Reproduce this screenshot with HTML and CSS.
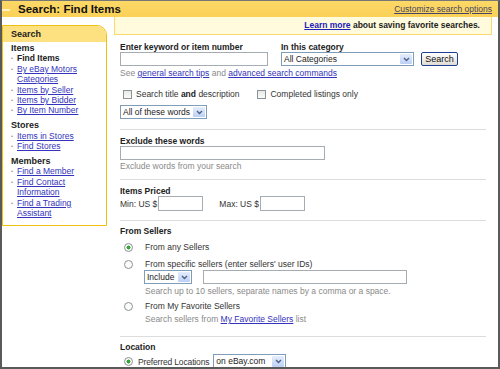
FILE: index.html
```html
<!DOCTYPE html>
<html lang="en">
<head>
    <meta charset="UTF-8">
    <meta name="viewport" content="width=device-width, initial-scale=1.0">
    <title>Search: Find Items</title>
    <link rel="stylesheet" href="styles.css">
</head>
<body>
<div class="frame">
    <div class="topbar">
        <span class="tab-mark"></span>
        <h1>Search: Find Items</h1>
        <a href="#" class="customize">Customize search options</a>
    </div>

    <div class="layout">
        <aside class="sidebar">
            <div class="side-head">Search</div>
            <div class="side-body">
                <div class="side-group">
                    <div class="side-title">Items</div>
                    <ul>
                        <li class="current">Find Items</li>
                        <li><a href="#">By eBay Motors Categories</a></li>
                        <li><a href="#">Items by Seller</a></li>
                        <li><a href="#">Items by Bidder</a></li>
                        <li><a href="#">By Item Number</a></li>
                    </ul>
                </div>
                <div class="side-group">
                    <div class="side-title">Stores</div>
                    <ul>
                        <li><a href="#">Items in Stores</a></li>
                        <li><a href="#">Find Stores</a></li>
                    </ul>
                </div>
                <div class="side-group">
                    <div class="side-title">Members</div>
                    <ul>
                        <li><a href="#">Find a Member</a></li>
                        <li><a href="#">Find Contact Information</a></li>
                        <li><a href="#">Find a Trading Assistant</a></li>
                    </ul>
                </div>
            </div>
        </aside>

        <main class="main">
            <div class="notice"><a href="#">Learn more</a> about saving favorite searches.</div>

            <section class="block block-first">
                <div class="search-row">
                    <div class="field">
                        <label class="label">Enter keyword or item number</label>
                        <input type="text" class="text keyword">
                    </div>
                    <div class="field">
                        <label class="label">In this category</label>
                        <span class="select category">
                            <span class="select-value">All Categories</span>
                            <span class="select-btn"><svg width="7" height="5" viewBox="0 0 7 5"><polyline points="1,1 3.5,3.5 6,1" fill="none" stroke="#4d6185" stroke-width="1.4"/></svg></span>
                        </span>
                    </div>
                    <button class="btn">Search</button>
                </div>
                <div class="hint">See <a href="#">general search tips</a> and <a href="#">advanced search commands</a></div>

                <div class="check-row">
                    <label class="check"><input type="checkbox"><span>Search title <b>and</b> description</span></label>
                    <label class="check"><input type="checkbox"><span>Completed listings only</span></label>
                </div>

                <span class="select words">
                    <span class="select-value">All of these words</span>
                    <span class="select-btn"><svg width="7" height="5" viewBox="0 0 7 5"><polyline points="1,1 3.5,3.5 6,1" fill="none" stroke="#4d6185" stroke-width="1.4"/></svg></span>
                </span>
            </section>

            <section class="block block-exclude">
                <label class="label">Exclude these words</label>
                <input type="text" class="text exclude">
                <div class="hint hint-tight">Exclude words from your search</div>
            </section>

            <section class="block block-price">
                <label class="label">Items Priced</label>
                <div class="price-row">
                    <span>Min: US $</span><input type="text" class="text price">
                    <span class="max">Max: US $</span><input type="text" class="text price">
                </div>
            </section>

            <section class="block block-sellers">
                <label class="label">From Sellers</label>
                <label class="radio first"><input type="radio" name="sellers" checked><span>From any Sellers</span></label>
                <label class="radio second"><input type="radio" name="sellers"><span>From specific sellers (enter sellers' user IDs)</span></label>
                <div class="sub">
                    <div class="sub-row">
                        <span class="select include">
                            <span class="select-value">Include</span>
                            <span class="select-btn"><svg width="7" height="5" viewBox="0 0 7 5"><polyline points="1,1 3.5,3.5 6,1" fill="none" stroke="#4d6185" stroke-width="1.4"/></svg></span>
                        </span>
                        <input type="text" class="text sellers">
                    </div>
                    <div class="hint">Search up to 10 sellers, separate names by a comma or a space.</div>
                </div>
                <label class="radio third"><input type="radio" name="sellers"><span>From My Favorite Sellers</span></label>
                <div class="sub hint">Search sellers from <a href="#">My Favorite Sellers</a> list</div>
            </section>

            <section class="block block-location">
                <label class="label">Location</label>
                <div class="loc-row">
                    <label class="radio inline"><input type="radio" name="loc" checked><span>Preferred Locations</span></label>
                    <span class="select location">
                        <span class="select-value">on eBay.com</span>
                        <span class="select-btn"><svg width="7" height="5" viewBox="0 0 7 5"><polyline points="1,1 3.5,3.5 6,1" fill="none" stroke="#4d6185" stroke-width="1.4"/></svg></span>
                    </span>
                </div>
            </section>
        </main>
    </div>
</div>
</body>
</html>
```

FILE: styles.css
```css
:root {
    --gold: #f0c010;
    --gold-light: #fde07f;
    --link: #3333bb;
    --text: #333;
    --muted: #8a8a8a;
    --field-border: #a5acb2;
}

body {
    margin: 0;
    font-family: "Liberation Sans", Arial, sans-serif;
    font-size: 8.5px;
    line-height: 10px;
    color: var(--text);
    background: #fff;
}

a {
    color: var(--link);
    text-decoration: underline;
}

.frame {
    width: 500px;
    height: 369px;
    box-sizing: border-box;
    border: 2px solid #5a5a5a;
    border-top: 1px solid #777;
    overflow: hidden;
    background: #fff;
}

/* top bar */
.topbar {
    height: 16px;
    display: flex;
    align-items: center;
    padding-right: 6px;
    background: linear-gradient(#fcd867, #fbd157);
}

.tab-mark {
    width: 8px;
    height: 2px;
    margin-top: 2px;
    margin-right: 8px;
    background: #fff3c4;
}

.topbar h1 {
    margin: 0;
    font-size: 11.5px;
    font-weight: bold;
    color: #111;
}

.customize {
    margin-left: auto;
    color: #444466;
}

.layout {
    display: flex;
    align-items: flex-start;
}

/* sidebar */
.sidebar {
    width: 105px;
    box-sizing: border-box;
    margin-top: 8px;
    border: 1px solid var(--gold);
    border-top-right-radius: 10px;
}

.side-head {
    height: 16px;
    line-height: 16px;
    padding-left: 8px;
    font-size: 9px;
    font-weight: bold;
    color: #222;
    background: var(--gold-light);
    border-top-right-radius: 9px;
}

.side-body {
    padding: 1px 8px 6px 8px;
    line-height: 10.4px;
}

.side-group + .side-group {
    margin-top: 4.5px;
}

.side-title {
    font-weight: bold;
    font-size: 9px;
    color: #222;
}

.side-body ul {
    margin: 0;
    padding: 0;
    list-style: none;
}

.side-body li {
    padding-left: 6px;
    text-indent: -6px;
}

.side-body li::before {
    content: "\2022";
    display: inline-block;
    width: 6px;
    text-indent: 0;
    font-size: 6px;
    line-height: 10.4px;
    vertical-align: top;
    color: #999;
}

.side-body li.current {
    font-weight: bold;
    color: #222;
}

/* main column */
.main {
    flex: 1;
    margin-left: 7px;
    margin-right: 6px;
}

.notice {
    height: 18px;
    box-sizing: border-box;
    line-height: 17px;
    padding-right: 11px;
    text-align: right;
    font-weight: bold;
    color: #222;
    background: #fffbdc;
    border: 1px solid #f7d970;
    border-top: none;
}

.notice a {
    color: #2222bb;
}

.block {
    margin: 0 6px;
    border-bottom: 1px solid #dcdcdc;
}

.block-first { padding: 6px 0 10px; }
.block-exclude { padding: 5px 0 8px; }
.block-price { padding: 5px 0 9px; }
.block-sellers { padding: 4px 0 12px; }
.block-location { padding: 4px 0 0; border-bottom: none; }

.label {
    display: block;
    padding-top: 1px;
    font-weight: bold;
    color: #222;
}

.search-row {
    display: flex;
    align-items: flex-end;
    gap: 13px;
}

.text {
    display: block;
    height: 14px;
    box-sizing: border-box;
    margin: 0;
    padding: 0 2px;
    border: 1px solid var(--field-border);
    font: inherit;
    background: #fff;
}

.keyword { width: 148px; }
.exclude { width: 205px; }
.sellers { width: 204px; display: inline-block; }

/* dropdowns */
.select {
    display: inline-flex;
    height: 14px;
    box-sizing: border-box;
    border: 1px solid #7f9db9;
    background: #fff;
    vertical-align: middle;
}

.select-value {
    flex: 1;
    min-width: 0;
    overflow: hidden;
    white-space: nowrap;
    padding-left: 2px;
    line-height: 12px;
    color: #222;
}

.select-btn {
    flex: none;
    width: 12px;
    margin: 1px;
    display: flex;
    align-items: center;
    justify-content: center;
    background: linear-gradient(#e6eefc, #bccff5);
    border-radius: 1px;
}

.category { width: 133px; }
.words { width: 87px; margin-top: 6px; display: flex; }
.include { width: 48px; }
.location { width: 73px; height: 15px; margin-left: 4px; }
.location .select-value { line-height: 13px; }

.btn {
    height: 14px;
    width: 37px;
    margin-left: -6px;
    padding: 0;
    font: inherit;
    font-size: 9px;
    color: #111;
    border: 1px solid #1c3f94;
    border-radius: 2px;
    background: linear-gradient(#ffffff, #dedcd4);
}

.hint {
    margin-top: 2px;
    color: var(--muted);
}

.hint-tight { margin-top: 1px; }

.check-row {
    display: flex;
    gap: 18px;
    margin-top: 11px;
    padding-left: 3px;
}

.check, .radio {
    display: flex;
    align-items: center;
    color: #333;
}

.check b {
    color: #222;
}

.check input, .radio input {
    appearance: none;
    -webkit-appearance: none;
    flex: none;
    width: 9px;
    height: 9px;
    margin: 0 4px 0 0;
    box-sizing: border-box;
    border: 1px solid #8a929a;
    background: linear-gradient(#e9e9e4, #fafaf8);
}

.radio input {
    border-radius: 50%;
    margin: 0 12px 0 4px;
    background: #fbfbf8;
}

.radio input:checked {
    background: radial-gradient(circle, #35b335 0, #2a9a2a 1.8px, #fbfbf8 2.2px);
}

.radio.first { margin-top: 6px; }
.radio.second { margin-top: 7px; }
.radio.third { margin-top: 5px; }

.sub {
    padding-left: 24px;
}

.sub-row {
    display: flex;
    gap: 11px;
    margin-top: 1px;
}

.sub-row .text, .sub-row .select {
    height: 14px;
}

.sub.hint { margin-top: 3px; padding-left: 25px; }
.sub .hint { padding-left: 1px; }

.price-row {
    display: flex;
    align-items: center;
}

.price {
    width: 45px;
    height: 15px;
    margin-left: 1px;
}

.max { margin-left: 16px; }

.loc-row {
    display: flex;
    align-items: center;
    margin-top: 2px;
}

.radio.inline input { margin-right: 5px; }
.radio.inline span { letter-spacing: -0.15px; }
```
